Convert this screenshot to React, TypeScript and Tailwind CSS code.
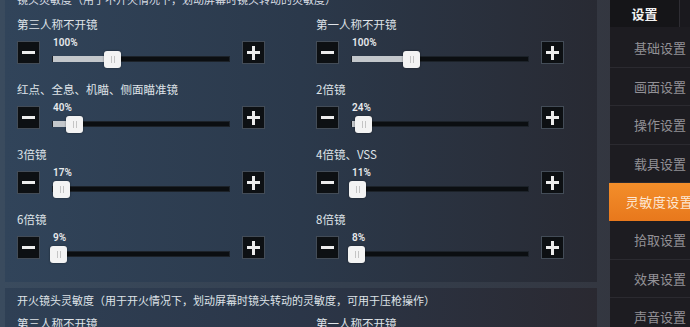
import React from "react";

type Row = { label: string; value: string; offset: number };

const leftRows: Row[] = [
  { label: "第三人称不开镜", value: "100%", offset: 51 },
  { label: "红点、全息、机瞄、侧面瞄准镜", value: "40%", offset: 13 },
  { label: "3倍镜", value: "17%", offset: 0 },
  { label: "6倍镜", value: "9%", offset: -3 },
];

const rightRows: Row[] = [
  { label: "第一人称不开镜", value: "100%", offset: 51 },
  { label: "2倍镜", value: "24%", offset: 3 },
  { label: "4倍镜、VSS", value: "11%", offset: -3 },
  { label: "8倍镜", value: "8%", offset: -4 },
];

const menu = ["基础设置", "画面设置", "操作设置", "载具设置", "灵敏度设置", "拾取设置", "效果设置", "声音设置"];

function StepButton({ plus }: { plus?: boolean }) {
  return (
    <div className="relative w-[23px] h-[23px] shrink-0 bg-[#0d1013] border border-[#434c57] flex items-center justify-center">
      <div className="w-[13px] h-[2.5px] bg-[#ececec]" />
      {plus && <div className="absolute w-[2.5px] h-[14px] bg-[#ececec]" />}
    </div>
  );
}

function SliderRow({ row }: { row: Row }) {
  return (
    <div className="flex flex-col">
      <div className="h-[16px] leading-[16px] text-[11.5px] text-[#dfe3e8] whitespace-nowrap">{row.label}</div>
      <div className="mt-[9px] flex items-start">
        <StepButton />
        <div className="ml-[12px] w-[178px] flex flex-col mt-[-4px]">
          <div className="h-[12px] leading-[12px] text-[10px] font-semibold text-[#e8eaec] font-['Roboto',sans-serif] pl-[1px]">
            {row.value}
          </div>
          <div className="relative mt-[7px] h-[6px] bg-[#0b0e11] border border-[#1c2229]">
            <div
              className="absolute top-[-1px] left-0 h-[6px] bg-[#c3c7cb]"
              style={{ width: Math.max(row.offset + 8, 0) }}
            />
            <div
              className="absolute top-[-6px] w-[17px] h-[17px] rounded-[3px] bg-[#f3f3f3] shadow-[0_0_2px_rgba(0,0,0,0.5)] flex items-center justify-center gap-[2px]"
              style={{ left: row.offset }}
            >
              <div className="w-[1px] h-[7px] bg-[#c4c4c4]" />
              <div className="w-[1px] h-[7px] bg-[#c4c4c4]" />
            </div>
          </div>
        </div>
        <div className="ml-[12px]">
          <StepButton plus />
        </div>
      </div>
    </div>
  );
}

export default function App() {
  return (
    <div className="w-[690px] h-[327px] overflow-hidden flex bg-gradient-to-r from-[#3a4b5e] via-[#343f4e] to-[#33343c] font-['Noto_Sans_CJK_SC','Noto_Sans',sans-serif]">
      <main className="w-[610px] shrink-0 flex flex-col">
        <section className="ml-[5px] w-[592px] h-[282px] shrink-0 pl-[12px] bg-gradient-to-r from-[#31445a] via-[#2b394b] to-[#282a33]">
          <div className="mt-[-8px] h-[14px] leading-[14px] text-[11px] text-[#d8dde3] whitespace-nowrap">
            镜头灵敏度（用于不开火情况下，划动屏幕时镜头转动的灵敏度）
          </div>
          <div className="mt-[10px] grid grid-cols-[299px_280px] gap-y-[17px]">
            {leftRows.map((r, i) => (
              <React.Fragment key={r.label}>
                <SliderRow row={r} />
                <SliderRow row={rightRows[i]} />
              </React.Fragment>
            ))}
          </div>
        </section>
        <div className="h-[6px] shrink-0" />
        <section className="ml-[5px] w-[592px] flex-1 pl-[12px] pt-[5px] bg-gradient-to-r from-[#2f4055] via-[#2b3648] to-[#2a2931]">
          <div className="h-[14px] leading-[14px] text-[11px] text-[#dfe3e8] whitespace-nowrap">
            开火镜头灵敏度（用于开火情况下，划动屏幕时镜头转动的灵敏度，可用于压枪操作）
          </div>
          <div className="mt-[8px] grid grid-cols-[299px_280px] text-[11.5px] leading-[16px] text-[#dfe3e8]">
            <div>第三人称不开镜</div>
            <div>第一人称不开镜</div>
          </div>
        </section>
      </main>

      <aside className="w-[100px] shrink-0 bg-[#1d1c21] flex flex-col">
        <div className="h-[27px] flex shrink-0">
          <div className="w-[70px] bg-[#151518] border-r border-[#2e2d33] flex items-center justify-center text-[13px] font-bold text-[#f2f2f2]">
            设置
          </div>
          <div className="flex-1 bg-[#1a191e]" />
        </div>
        <div className="h-[2px] shrink-0" />
        {menu.map((m) => {
          const active = m === "灵敏度设置";
          return active ? (
            <div
              key={m}
              className="h-[38px] shrink-0 -ml-[1px] bg-gradient-to-b from-[#f38e2a] to-[#e8781c] flex items-center justify-center text-[13px] text-[#fde8d4] tracking-[0.5px]"
            >
              {m}
            </div>
          ) : (
            <div
              key={m}
              className="h-[38.5px] shrink-0 border-b border-[#2b2a30] flex items-center justify-center text-[13px] text-[#929196]"
            >
              {m}
            </div>
          );
        })}
      </aside>
    </div>
  );
}
